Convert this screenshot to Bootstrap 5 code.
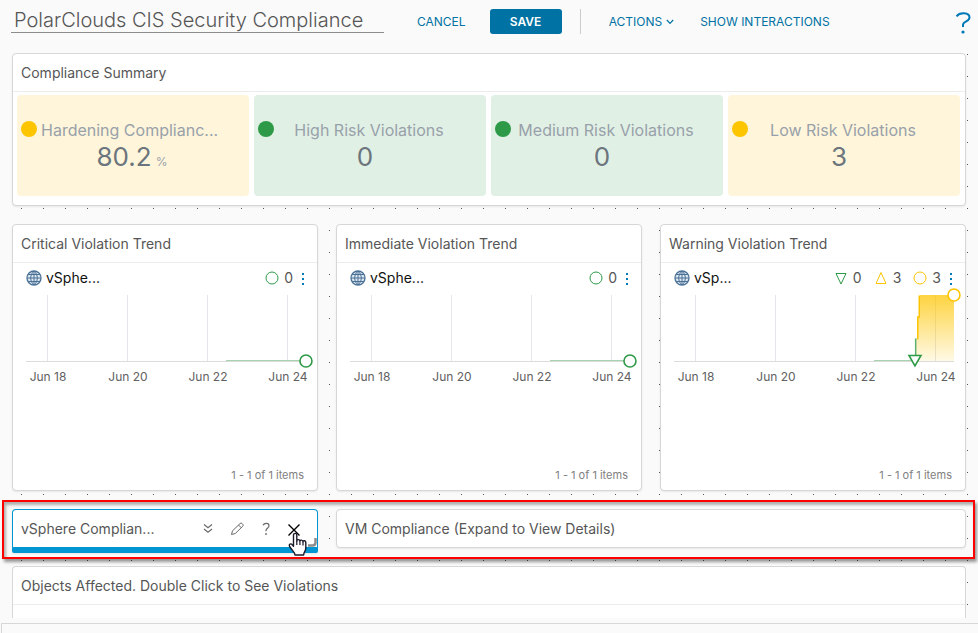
<!DOCTYPE html>
<html lang="en">
<head>
<meta charset="utf-8">
<meta name="viewport" content="width=device-width, initial-scale=1">
<title>PolarClouds CIS Security Compliance</title>
<link href="https://cdn.jsdelivr.net/npm/bootstrap@5.3.0/dist/css/bootstrap.min.css" rel="stylesheet">
<style>
  :root { --ink: #565656; --link: #0072a3; --line: #d7d7d7; --ok: #2e9a47; --warn: #fdc500; }
  body { font-family: Inter, "Open Sans", "Liberation Sans", sans-serif; font-size: 14px; line-height: 20px; color: var(--ink); background: #fafafa; }

  .topbar { height: 53px; padding: 8px 5px 0 11px; }
  .title-input { width: 373px; height: 25px; padding: 0 3px; font-size: 20px; font-weight: 300; color: var(--ink); background: transparent; border: 0; border-bottom: 1px solid #8c8c8c; border-radius: 0; }
  .actions { gap: 18px; padding: 1px 0 0 33px; }
  .action { --bs-btn-color: var(--link); --bs-btn-hover-color: #004b6b; --bs-btn-font-size: 12px; --bs-btn-padding-x: 0; --bs-btn-padding-y: 0; --bs-btn-border-width: 0px; line-height: 24px; white-space: nowrap; }
  .action-save { width: 72px; border-radius: 3px; font-weight: 600; --bs-btn-color: #fff; --bs-btn-bg: var(--link); --bs-btn-hover-color: #fff; --bs-btn-hover-bg: #005c84; }
  .rule { width: 1px; height: 25px; background: #ccc; }
  .help-link { color: #0079b8; line-height: 0; }

  .canvas { padding: 0 12px; background: conic-gradient(at 1px 1px, transparent 75%, #555 0) 21px 1px / 22px 22px; }
  .stack { gap: 18px; }
  .stack .row { --bs-gutter-x: 18px; }
  .panel { background: #fff; border: 1px solid var(--line); border-radius: 4px; box-shadow: 0 1px 2px rgba(0,0,0,.08); }
  .panel-head { min-height: 37px; padding: 0 8px; }
  .panel-head.ruled { min-height: 38px; border-bottom: 1px solid #ececec; }
  .panel-head h2 { margin: 0; font-size: 14px; line-height: 20px; font-weight: 400; }

  .scores { gap: 5px; padding: 3px 5px 9px 4px; }
  .score { flex: 1 1 0; min-width: 0; height: 101px; padding: 24px 14px 0 4px; border-radius: 4px; }
  .score-ok { background: #e1f0e5; --dot: var(--ok); }
  .score-warn { background: #fff5da; --dot: var(--warn); }
  .score-dot { flex: none; width: 16px; height: 16px; margin-top: 2px; border-radius: 50%; background: var(--dot); }
  .score-name { padding: 0 12px 0 4px; font-size: 16px; line-height: 22px; color: #98a1aa; white-space: nowrap; }
  .score-value { font-size: 26px; line-height: 32px; color: #6c757d; }
  .score-unit { font-size: 12px; color: #98a1aa; }

  .trend-body { min-height: 227px; }
  .trend-row { height: 30px; gap: 8px; padding: 0 12px 0 13px; }
  .trend-name { font-size: 14px; color: #111; }
  .counts { gap: 12px; }
  .count { gap: 5px; }
  .dots-btn { --bs-btn-padding-x: 0; --bs-btn-padding-y: 0; --bs-btn-border-width: 0px; padding-top: 2px; line-height: 0; }
  .trend-chart text { font-size: 12px; fill: #616161; text-anchor: middle; }
  .pager { padding: 0 13px 5px; font-size: 11px; line-height: 20px; color: #808080; }

  .panel-active { border-color: #0095d3; border-bottom-width: 6px; border-radius: 4px 4px 2px 2px; }
  .tools { gap: 12px; padding-right: 7px; }
  .tools .btn { --bs-btn-padding-x: 0; --bs-btn-padding-y: 0; --bs-btn-border-width: 0px; line-height: 0; color: #6a6a6a; }
  .grip { right: 0; bottom: 0; }
  .pointer { right: 8px; bottom: -11px; z-index: 4; }
  .highlight { inset: -9px -9px -11px -10px; border: 2px solid #f00; box-shadow: 2px 3px 3px rgba(0,0,0,.4), inset 2px 3px 3px rgba(0,0,0,.3); pointer-events: none; z-index: 3; }
  .panel-last { border-bottom: 0; border-radius: 4px 4px 0 0; box-shadow: none; min-height: 52px; }
  .tray { height: 10px; margin: 5px 0 0 1px; border: 1px solid var(--line); border-width: 1px 0 0 1px; }
  .row-collapsed { height: 39px; }
</style>
</head>
<body>
<svg width="0" height="0" class="position-absolute" aria-hidden="true">
  <symbol id="globe" viewBox="0 0 16 16">
    <circle cx="8" cy="8" r="7" fill="#dce7f1" stroke="#4a7196" stroke-width="1.3"/>
    <path d="M8 1v14M1 8h14M2.2 4.5h11.6M2.2 11.5h11.6M8 1C3.6 4.6 3.6 11.4 8 15M8 1c4.4 3.6 4.4 10.400 0 14" fill="none" stroke="#4a7196"/>
  </symbol>
  <symbol id="ring" viewBox="0 0 14 14"><circle cx="7" cy="7" r="6" fill="none" stroke="currentColor"/></symbol>
  <symbol id="tri-up" viewBox="0 0 14 14"><path d="M7 1.500 12 12.500H2Z" fill="none" stroke="currentColor"/></symbol>
  <symbol id="tri-down" viewBox="0 0 14 14"><path d="M2 2.500h10L7 13Z" fill="none" stroke="currentColor"/></symbol>
  <symbol id="kebab" viewBox="0 0 4 14"><path d="M1 1h2v2H1zM1 6h2v2H1zM1 11h2v2H1z" fill="#0079b8"/></symbol>
</svg>

<header class="topbar d-flex align-items-start">
  <input class="title-input" type="text" aria-label="Dashboard name" value="PolarClouds CIS Security Compliance">
  <div class="actions d-flex">
    <div class="d-flex gap-4">
      <button type="button" class="btn action">CANCEL</button>
      <button type="button" class="btn action action-save">SAVE</button>
    </div>
    <div class="d-flex">
      <div class="rule me-4"></div>
      <button type="button" class="btn action ms-1 me-2 d-flex align-items-center gap-1">ACTIONS
        <svg width="8" height="6" viewBox="0 0 8 6" aria-hidden="true"><path d="M.8 1 4 4.400 7.200 1" fill="none" stroke="currentColor" stroke-width="1.200"/></svg>
      </button>
    </div>
    <button type="button" class="btn action">SHOW INTERACTIONS</button>
  </div>
  <a href="#help" class="help-link ms-auto pt-1" aria-label="Help">
    <svg width="18" height="24" viewBox="0 0 18 24" aria-hidden="true"><path d="M1.500 4.300C4.500.300 14.500 0 14.500 5.600c0 4.400-6.500 3.200-6.500 7.500v2" fill="none" stroke="currentColor" stroke-width="2"/><circle cx="8" cy="20" r="1.600" fill="currentColor"/></svg>
  </a>
</header>

<main class="canvas">
  <div class="stack d-flex flex-column">
    <section class="panel">
      <div class="panel-head ruled d-flex align-items-center"><h2>Compliance Summary</h2></div>
      <div class="scores d-flex">
        <div class="score score-warn">
          <div class="d-flex"><span class="score-dot"></span><div class="score-name flex-fill">Hardening Complianc...</div></div>
          <div class="score-value text-center ps-2">80.2<span class="score-unit ms-1">%</span></div>
        </div>
        <div class="score score-ok">
          <div class="d-flex"><span class="score-dot"></span><div class="score-name flex-fill text-center">High Risk Violations</div></div>
          <div class="score-value text-center">0</div>
        </div>
        <div class="score score-ok">
          <div class="d-flex"><span class="score-dot"></span><div class="score-name flex-fill text-center">Medium Risk Violations</div></div>
          <div class="score-value text-center">0</div>
        </div>
        <div class="score score-warn">
          <div class="d-flex"><span class="score-dot"></span><div class="score-name flex-fill text-center">Low Risk Violations</div></div>
          <div class="score-value text-center">3</div>
        </div>
      </div>
    </section>

    <div class="row">
      <div class="col-4">
        <section class="panel">
          <div class="panel-head ruled d-flex align-items-center"><h2>Critical Violation Trend</h2></div>
          <div class="trend-body d-flex flex-column">
            <div class="trend-row d-flex align-items-center">
              <div class="trend-name d-flex align-items-center gap-1 me-auto"><svg width="16" height="16" aria-hidden="true"><use href="#globe"/></svg>vSphe...</div>
              <div class="counts d-flex align-items-center">
                <span class="count d-flex align-items-center"><svg width="14" height="14" color="#2e9a47"><use href="#ring"/></svg>0</span>
              </div>
              <button type="button" class="btn dots-btn" aria-label="More"><svg width="4" height="14"><use href="#kebab"/></svg></button>
            </div>
            <svg class="trend-chart w-100 overflow-visible" viewBox="0 0 304 95" role="img" aria-label="Critical violations, Jun 18 to Jun 24">
              <path d="M34.500 2v66M114.500 2v66M194.500 2v66M274.500 2v66" stroke="#e4e4ea"/>
              <path d="M13 68.500h280" stroke="#dcdcdc"/>
              <path d="M213 67.500h74" stroke="#a5d3ae"/>
              <circle cx="293" cy="68" r="6" fill="#fff" stroke="#2e9a47" stroke-width="1.600"/>
              <text x="35" y="88">Jun 18</text><text x="115" y="88">Jun 20</text><text x="195" y="88">Jun 22</text><text x="275" y="88">Jun 24</text>
            </svg>
            <div class="pager mt-auto text-end">1 - 1 of 1 items</div>
          </div>
        </section>
      </div>
      <div class="col-4">
        <section class="panel">
          <div class="panel-head ruled d-flex align-items-center"><h2>Immediate Violation Trend</h2></div>
          <div class="trend-body d-flex flex-column">
            <div class="trend-row d-flex align-items-center">
              <div class="trend-name d-flex align-items-center gap-1 me-auto"><svg width="16" height="16" aria-hidden="true"><use href="#globe"/></svg>vSphe...</div>
              <div class="counts d-flex align-items-center">
                <span class="count d-flex align-items-center"><svg width="14" height="14" color="#2e9a47"><use href="#ring"/></svg>0</span>
              </div>
              <button type="button" class="btn dots-btn" aria-label="More"><svg width="4" height="14"><use href="#kebab"/></svg></button>
            </div>
            <svg class="trend-chart w-100 overflow-visible" viewBox="0 0 304 95" role="img" aria-label="Immediate violations, Jun 18 to Jun 24">
              <path d="M34.500 2v66M114.500 2v66M194.500 2v66M274.500 2v66" stroke="#e4e4ea"/>
              <path d="M13 68.500h280" stroke="#dcdcdc"/>
              <path d="M213 67.500h74" stroke="#a5d3ae"/>
              <circle cx="293" cy="68" r="6" fill="#fff" stroke="#2e9a47" stroke-width="1.600"/>
              <text x="35" y="88">Jun 18</text><text x="115" y="88">Jun 20</text><text x="195" y="88">Jun 22</text><text x="275" y="88">Jun 24</text>
            </svg>
            <div class="pager mt-auto text-end">1 - 1 of 1 items</div>
          </div>
        </section>
      </div>
      <div class="col-4">
        <section class="panel">
          <div class="panel-head ruled d-flex align-items-center"><h2>Warning Violation Trend</h2></div>
          <div class="trend-body d-flex flex-column">
            <div class="trend-row d-flex align-items-center">
              <div class="trend-name d-flex align-items-center gap-1 me-auto"><svg width="16" height="16" aria-hidden="true"><use href="#globe"/></svg>vSp...</div>
              <div class="counts d-flex align-items-center">
                <span class="count d-flex align-items-center"><svg width="14" height="14" color="#2e9a47"><use href="#tri-down"/></svg>0</span>
                <span class="count d-flex align-items-center"><svg width="14" height="14" color="#fdc500"><use href="#tri-up"/></svg>3</span>
                <span class="count d-flex align-items-center"><svg width="14" height="14" color="#fdc500"><use href="#ring"/></svg>3</span>
              </div>
              <button type="button" class="btn dots-btn" aria-label="More"><svg width="4" height="14"><use href="#kebab"/></svg></button>
            </div>
            <svg class="trend-chart w-100 overflow-visible" viewBox="0 0 304 95" role="img" aria-label="Warning violations, Jun 18 to Jun 24">
              <defs><linearGradient id="fade" x1="0" y1="0" x2="0" y2="1"><stop offset="0" stop-color="#fdc500" stop-opacity=".75"/><stop offset="1" stop-color="#fdc500" stop-opacity=".1"/></linearGradient></defs>
              <path d="M34.500 2v66M114.500 2v66M194.500 2v66M274.500 2v66" stroke="#e4e4ea"/>
              <path d="M13 68.500h280" stroke="#dcdcdc"/>
              <path d="M213 67.500h37" stroke="#a5d3ae"/>
              <path d="M255 68V45h2V24h2V2h34v66Z" fill="url(#fade)"/>
              <path d="M254.700 64V45.500" stroke="#5db070" stroke-width="1.500" fill="none"/>
              <path d="M256 45.500h.800V24h1.500V2.500" stroke="#fdc500" stroke-width="1.500" fill="none"/>
              <circle cx="293" cy="2" r="6" fill="#fff" stroke="#fdc500" stroke-width="1.600"/>
              <path d="M248 62.500h12L254 73Z" fill="#fff" stroke="#2e9a47" stroke-width="1.600"/>
              <text x="35" y="88">Jun 18</text><text x="115" y="88">Jun 20</text><text x="195" y="88">Jun 22</text><text x="275" y="88">Jun 24</text>
            </svg>
            <div class="pager mt-auto text-end">1 - 1 of 1 items</div>
          </div>
        </section>
      </div>
    </div>

    <div class="position-relative">
      <div class="row row-collapsed">
        <div class="col-4">
          <section class="panel panel-active position-relative">
            <div class="panel-head d-flex align-items-center justify-content-between pe-0">
              <h2>vSphere Complian...</h2>
              <div class="tools d-flex align-items-center me-2">
                <button type="button" class="btn" aria-label="Expand"><svg width="16" height="16" viewBox="0 0 16 16"><path d="m4 3.500 4 3.300 4-3.300M4 8l4 3.300L12 8" fill="none" stroke="currentColor" stroke-width="1.200"/></svg></button>
                <button type="button" class="btn" aria-label="Edit"><svg width="18" height="16" viewBox="0 0 18 16"><path d="m3.500 13.500 1-3.700 7.600-7.300q1-.9 2 0l.7.8q.8.900 0 1.900l-7.500 7.300ZM10.500 4l2.800 2.800" fill="none" stroke="currentColor"/></svg></button>
                <button type="button" class="btn" aria-label="Help"><svg width="16" height="16" viewBox="0 0 16 16"><path d="M5 4.300C6.400 1.500 11 1.800 11 4.800c0 2.400-3 2.400-3 4.700v.8" fill="none" stroke="currentColor" stroke-width="1.200"/><circle cx="8" cy="13" r=".9" fill="currentColor"/></svg></button>
                <button type="button" class="btn" aria-label="Close"><svg width="16" height="16" viewBox="0 0 16 16"><path d="m2.500 3.500 11 11M13.500 3.500l-11 11" fill="none" stroke="#000" stroke-width="1.400"/></svg></button>
              </div>
            </div>
            <svg class="grip position-absolute" width="9" height="9" viewBox="0 0 9 9" aria-hidden="true"><path d="M7.500 0v4.500q0 3-3 3H0" fill="none" stroke="#8c8c8c" stroke-width="2.500"/></svg>
            <svg class="pointer position-absolute" width="22" height="26" viewBox="0 0 22 26" aria-hidden="true">
              <path d="M6.500 3c0-2.200 3.300-2.200 3.300 0v6c0-1.800 3.100-1.800 3.100.2 0-1.600 3.100-1.500 3.100.5 0-1.500 2.800-1.300 2.800.8v5.800c0 2.600-2 3.500-2.200 6.700H8c-.3-3.200-3.600-5.300-5.400-8.700-1.200-2.300 1.500-3.200 2.700-1.500l1.200 1.500Z" fill="#fff" stroke="#1a1a2a" stroke-width="1.400" stroke-linejoin="round"/>
              <path d="M9.800 9v4M12.900 9.500V13M16 10v3.500" stroke="#1a1a2a" stroke-width="1.200" fill="none"/>
            </svg>
          </section>
        </div>
        <div class="col-8">
          <section class="panel">
            <div class="panel-head d-flex align-items-center"><h2>VM Compliance (Expand to View Details)</h2></div>
          </section>
        </div>
      </div>
      <div class="highlight position-absolute"></div>
    </div>

    <section class="panel panel-last">
      <div class="panel-head ruled d-flex align-items-center"><h2>Objects Affected. Double Click to See Violations</h2></div>
    </section>
  </div>
</main>
<div class="tray"></div>
<script src="https://cdn.jsdelivr.net/npm/bootstrap@5.3.0/dist/js/bootstrap.bundle.min.js"></script>
</body>
</html>
